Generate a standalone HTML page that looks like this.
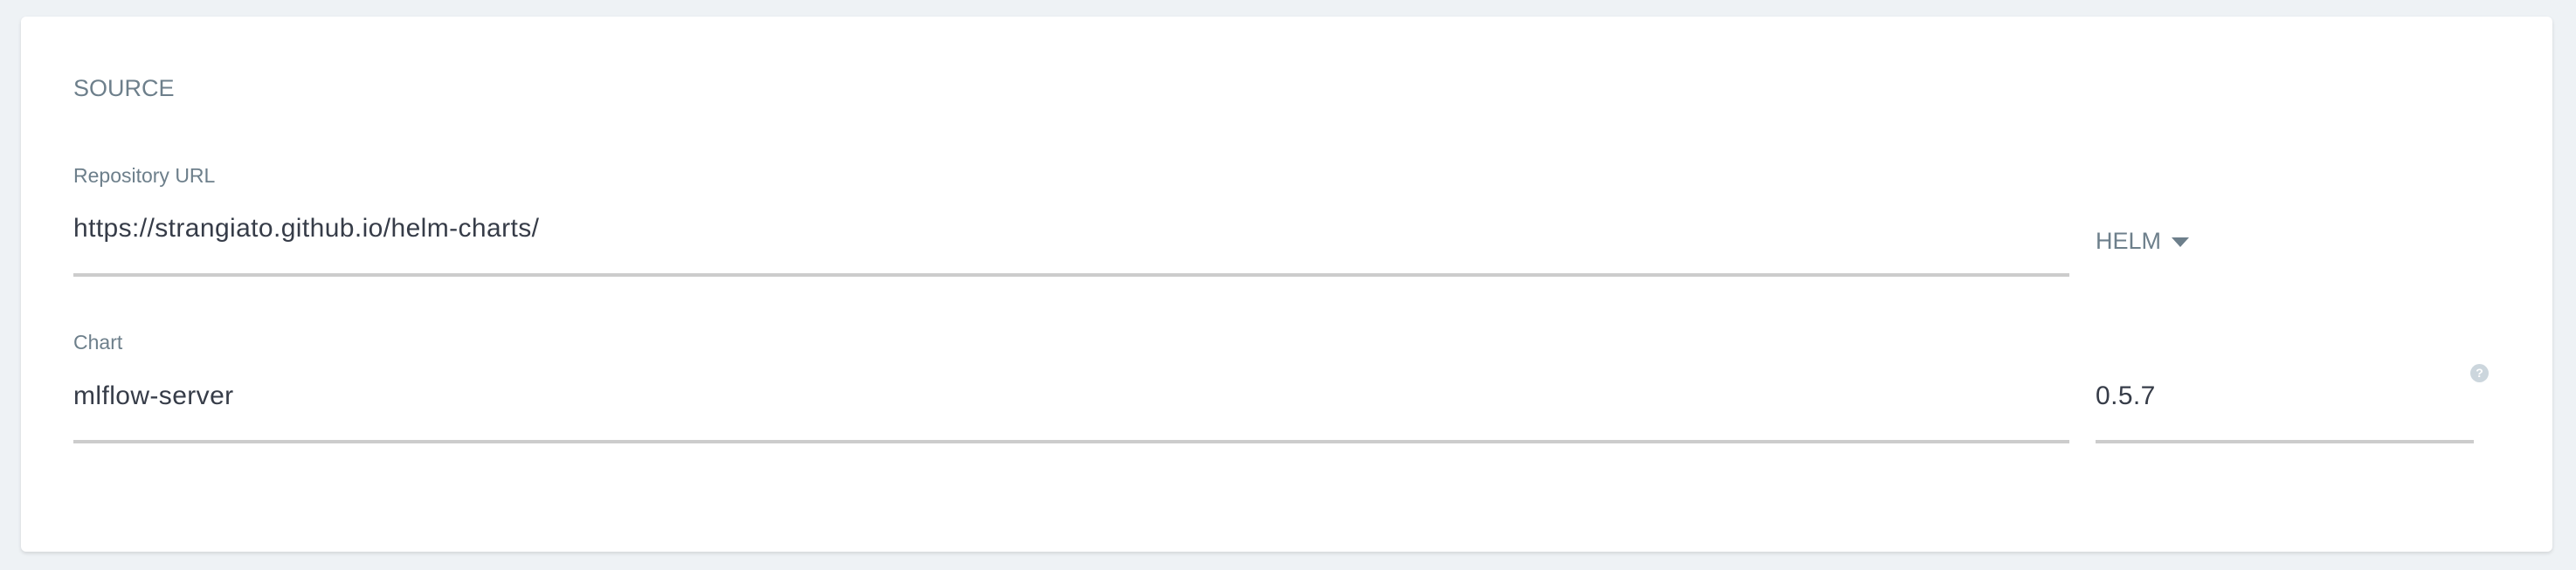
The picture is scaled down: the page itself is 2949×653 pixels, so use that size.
<!DOCTYPE html>
<html><head><style>
html,body{margin:0;padding:0;width:2949px;height:653px;background:#eef2f5;overflow:hidden;font-family:"Liberation Sans",sans-serif;}
.card{position:absolute;left:24px;top:19px;width:2898px;height:613px;background:#fff;border-radius:6px;box-shadow:0 2px 4px rgba(0,0,0,0.12);}
.t{position:absolute;white-space:nowrap;line-height:1;}
.lbl{color:#6d7f8b;font-size:23px;}
.val{color:#363c48;font-size:30px;letter-spacing:0.4px;}
.line{position:absolute;height:4px;background:#cccccc;}
</style></head><body>
<div class="card"></div>
<div class="t" style="left:84px;top:88px;font-size:27px;color:#6d7f8b;">SOURCE</div>
<div class="t lbl" style="left:84px;top:190px;">Repository URL</div>
<div class="t val" style="left:84px;top:247px;">https://strangiato.github.io/helm-charts/</div>
<div class="line" style="left:84px;top:313px;width:2285px;"></div>
<div class="t" style="left:2399px;top:263px;font-size:27px;color:#6d7f8b;">HELM</div>
<svg style="position:absolute;left:2486px;top:272px" width="20" height="12"><path d="M0 0H20L10 11Z" fill="#6d7f8b"/></svg>
<div class="t lbl" style="left:84px;top:381px;">Chart</div>
<div class="t val" style="left:84px;top:439px;">mlflow-server</div>
<div class="line" style="left:84px;top:504px;width:2285px;"></div>
<div class="t val" style="left:2399px;top:439px;">0.5.7</div>
<div class="line" style="left:2399px;top:504px;width:433px;"></div>
<div style="position:absolute;left:2828px;top:417px;width:21px;height:21px;border-radius:50%;background:#ccd6dd;color:#fff;font-size:14px;font-weight:bold;text-align:center;line-height:21px;">?</div>
</body></html>
